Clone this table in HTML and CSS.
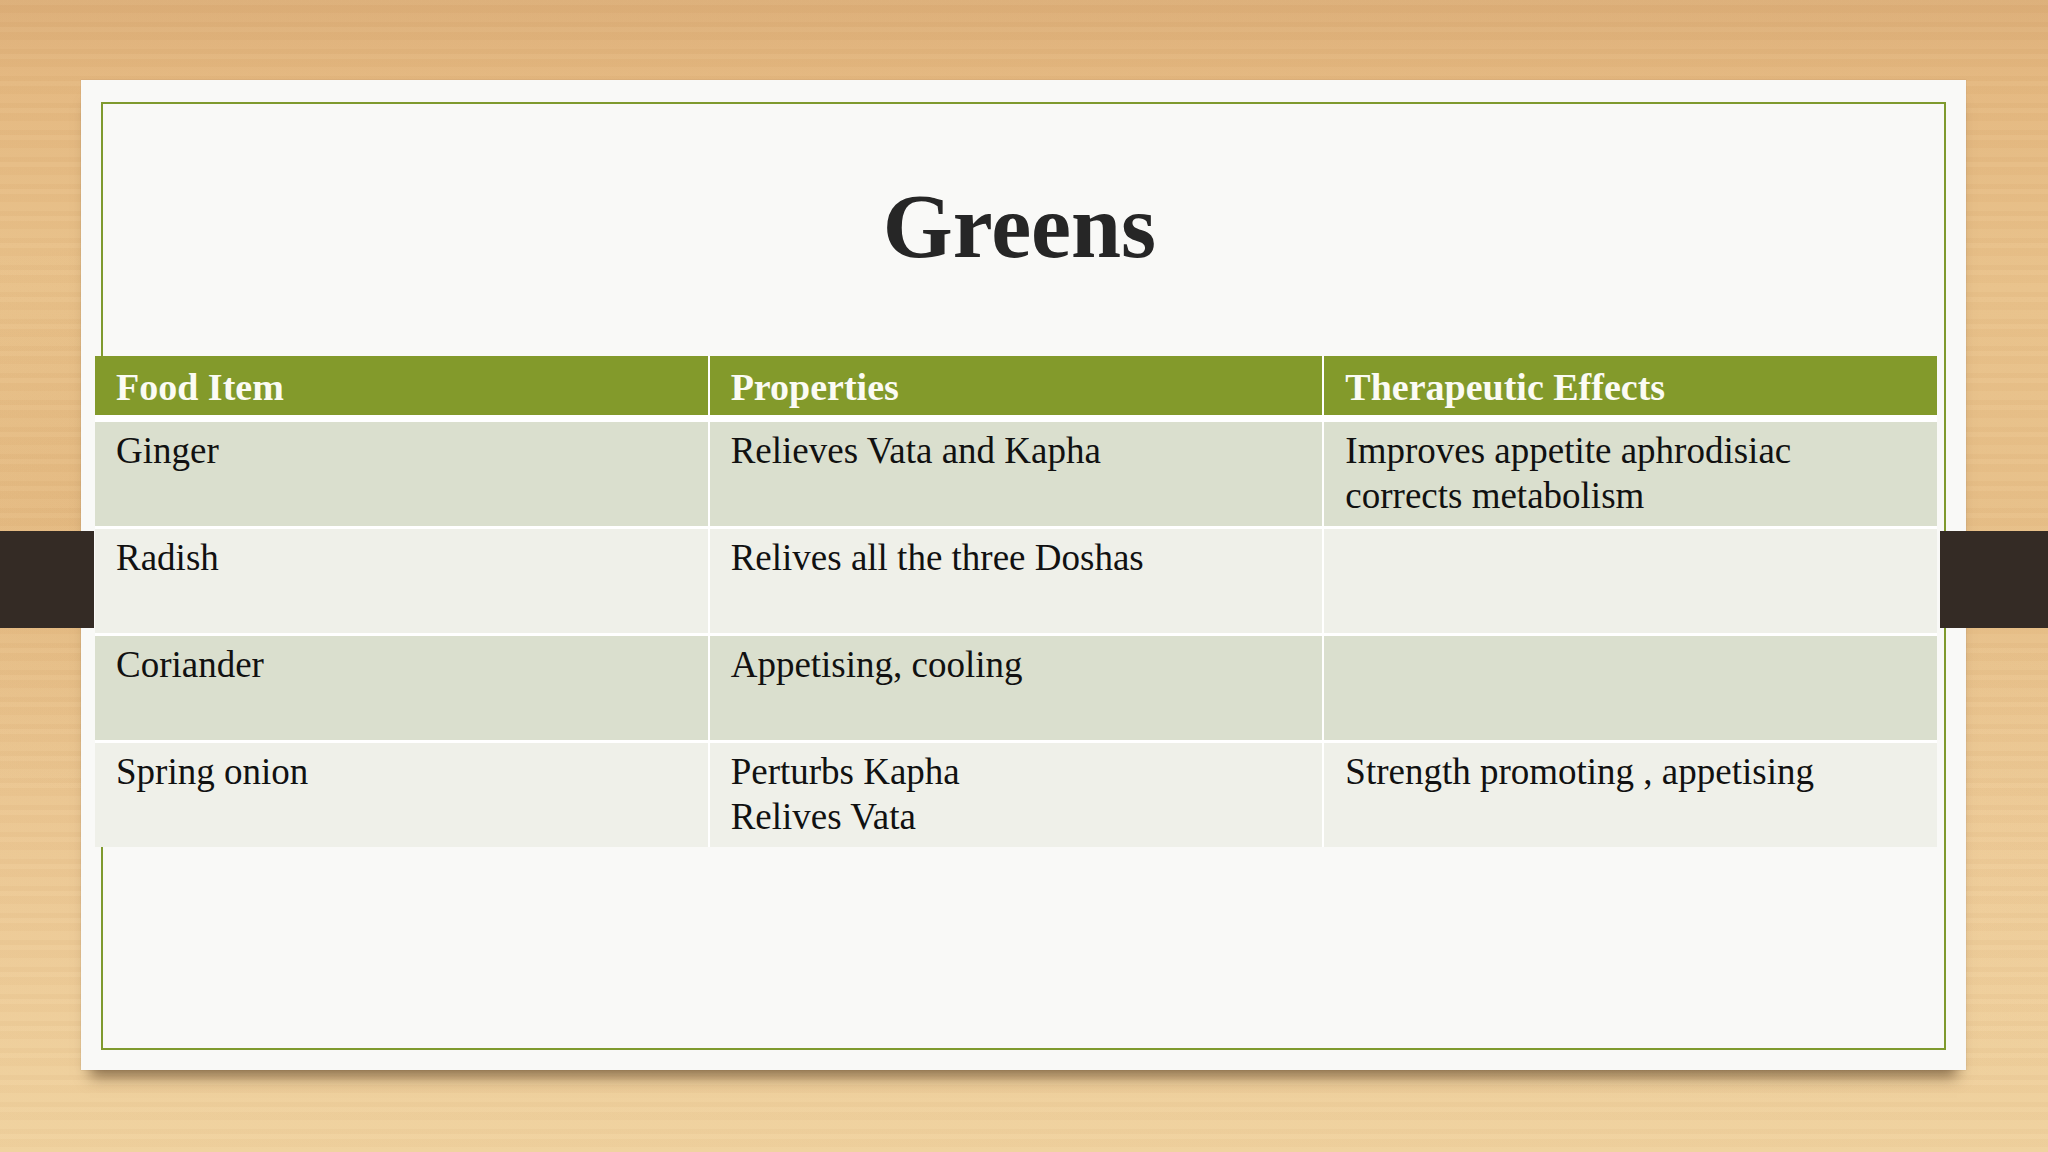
FILE: index.html
```html
<!DOCTYPE html>
<html lang="en">
<head>
<meta charset="utf-8">
<title>Greens</title>
<link rel="stylesheet" href="styles.css">
</head>
<body>
<div class="slide">
  <div class="frame">
    <h1 class="title">Greens</h1>
    <div class="grid" role="table">
      <div class="th" role="columnheader">Food Item</div>
      <div class="th" role="columnheader">Properties</div>
      <div class="th" role="columnheader">Therapeutic Effects</div>

      <div class="td odd" role="cell">Ginger</div>
      <div class="td odd" role="cell">Relieves Vata and Kapha</div>
      <div class="td odd" role="cell">Improves appetite aphrodisiac<br>corrects metabolism</div>

      <div class="td even" role="cell">Radish</div>
      <div class="td even" role="cell">Relives all the three Doshas</div>
      <div class="td even" role="cell"></div>

      <div class="td odd" role="cell">Coriander</div>
      <div class="td odd" role="cell">Appetising, cooling</div>
      <div class="td odd" role="cell"></div>

      <div class="td even" role="cell">Spring onion</div>
      <div class="td even" role="cell">Perturbs Kapha<br>Relives Vata</div>
      <div class="td even" role="cell">Strength promoting , appetising</div>
    </div>
  </div>
</div>
<div class="band band-left"></div>
<div class="band band-right"></div>
</body>
</html>
```

FILE: styles.css
```css
html, body {
  margin: 0;
  padding: 0;
}

body {
  width: 2048px;
  height: 1152px;
  overflow: hidden;
  position: relative;
  box-sizing: border-box;
  padding: 80px 0 0 81px;
  font-family: "Liberation Serif", "DejaVu Serif", serif;
  background-color: #e8c18b;
  background-image:
    repeating-linear-gradient(180deg, rgba(255, 240, 210, 0.04) 0 5px, rgba(160, 100, 40, 0.03) 5px 13px, rgba(255, 240, 210, 0.02) 13px 22px, rgba(150, 95, 40, 0.035) 22px 27px),
    radial-gradient(ellipse 900px 300px at 20% 45%, rgba(190, 120, 50, 0.12), rgba(190, 120, 50, 0) 100%),
    radial-gradient(ellipse 700px 250px at 85% 75%, rgba(255, 235, 190, 0.15), rgba(255, 235, 190, 0) 100%),
    linear-gradient(180deg, #dcae78 0%, #e4b880 7%, #e9c28b 25%, #e7bf88 50%, #ecc894 75%, #f0d29f 100%);
}

.slide {
  width: 1885px;
  height: 990px;
  box-sizing: border-box;
  padding: 22px 20px 20px 20px;
  background: #f9f9f7;
  box-shadow: 0 16px 14px -9px rgba(70, 45, 20, 0.6), 0 0 1px rgba(120, 100, 80, 0.4);
}

.frame {
  height: 100%;
  box-sizing: border-box;
  border: 2px solid #7f9a2e;
  padding-top: 73px;
}

.title {
  margin: 0;
  padding-right: 8px;
  text-align: center;
  font-family: "Liberation Serif", serif;
  font-weight: 700;
  font-size: 90px;
  line-height: 100px;
  color: #262626;
}

.grid {
  display: grid;
  grid-template-columns: repeat(3, 1fr);
  column-gap: 2px;
  row-gap: 3px;
  width: 1842px;
  margin: 79px 0 0 -8px;
  background: #ffffff;
}

.th {
  height: 59px;
  margin-bottom: 4px;
  box-sizing: border-box;
  padding: 9px 0 0 21px;
  background: #839a2b;
  color: #fbfbf4;
  font-weight: 700;
  font-size: 38px;
  line-height: 45px;
}

.td {
  height: 104px;
  box-sizing: border-box;
  padding: 6px 0 0 21px;
  color: #111111;
  font-size: 37px;
  line-height: 45px;
}

.odd {
  background: #dadfce;
}

.even {
  background: #eff0e9;
}

.band {
  position: absolute;
  top: 531px;
  height: 97px;
  background: #342b25;
}

.band-left {
  left: 0;
  width: 94px;
}

.band-right {
  left: 1940px;
  width: 108px;
}
```
